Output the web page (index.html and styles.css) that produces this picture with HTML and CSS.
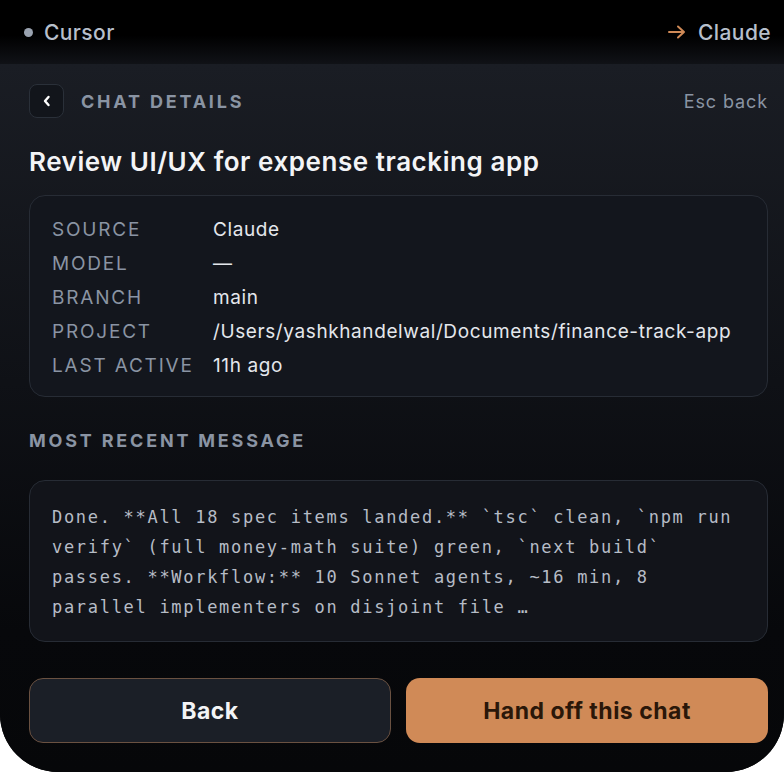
FILE: index.html
```html
<!DOCTYPE html>
<html lang="en">
<head>
<meta charset="utf-8">
<title>Chat details</title>
<link rel="stylesheet" href="styles.css">
</head>
<body>
<div class="frame">
  <header class="topbar">
    <div class="app-from"><span class="dot"></span><span>Cursor</span></div>
    <div class="app-to">
      <svg class="arrow" width="18" height="14" viewBox="0 0 18 14" aria-hidden="true"><path d="M1 7 H16 M10 1.5 L16 7 L10 12.5" fill="none" stroke="#d08a57" stroke-width="2" stroke-linecap="round" stroke-linejoin="round"/></svg>
      <span>Claude</span>
    </div>
  </header>
  <main class="panel">
    <div class="panel-head">
      <div class="head-left">
        <button class="icon-btn" aria-label="Back">
          <svg width="10" height="12" viewBox="0 0 10 12" aria-hidden="true"><path d="M6.5 2 L3 6 L6.5 10" fill="none" stroke="#ffffff" stroke-width="2.4" stroke-linecap="round" stroke-linejoin="round"/></svg>
        </button>
        <span class="section-title">CHAT DETAILS</span>
      </div>
      <span class="hint">Esc back</span>
    </div>
    <h1 class="title">Review UI/UX for expense tracking app</h1>
    <section class="card meta">
      <div class="meta-row"><span class="meta-label">SOURCE</span><span class="meta-value">Claude</span></div>
      <div class="meta-row"><span class="meta-label">MODEL</span><span class="meta-value">—</span></div>
      <div class="meta-row"><span class="meta-label">BRANCH</span><span class="meta-value">main</span></div>
      <div class="meta-row"><span class="meta-label">PROJECT</span><span class="meta-value">/Users/yashkhandelwal/Documents/finance-track-app</span></div>
      <div class="meta-row"><span class="meta-label">LAST ACTIVE</span><span class="meta-value">11h ago</span></div>
    </section>
    <h2 class="section-title msg-title">MOST RECENT MESSAGE</h2>
    <section class="card message">
      <p>Done. **All 18 spec items landed.** `tsc` clean, `npm run verify` (full money-math suite) green, `next build` passes. **Workflow:** 10 Sonnet agents, ~16 min, 8 parallel implementers on disjoint file …</p>
    </section>
    <div class="actions">
      <button class="btn btn-secondary">Back</button>
      <button class="btn btn-primary">Hand off this chat</button>
    </div>
  </main>
</div>
</body>
</html>
```
FILE: styles.css
```css
* { box-sizing: border-box; }
html, body { margin: 0; padding: 0; background: #ffffff; }
body { font-family: Inter, "Noto Sans", "Liberation Sans", sans-serif; }

.frame {
  width: 784px;
  height: 772px;
  background: #000;
  border-radius: 0 0 58px 58px;
  overflow: hidden;
  display: flex;
  flex-direction: column;
}

.topbar {
  height: 64px;
  flex: none;
  display: flex;
  align-items: center;
  justify-content: space-between;
  padding: 0 13px 0 24px;
  background: linear-gradient(#000 0%, #000 55%, #101217 100%);
  color: #b7bfcb;
  font-size: 21px;
  font-weight: 500;
  letter-spacing: 0.4px;
}
.app-from, .app-to { display: flex; align-items: center; }
.app-from { gap: 11px; }
.app-to { gap: 12px; }
.dot { width: 9px; height: 9px; border-radius: 50%; background: #9aa3b0; }
.arrow { display: block; }

.panel {
  flex: 1;
  display: flex;
  flex-direction: column;
  padding: 20px 16px 0 29px;
  background: linear-gradient(#1a1d24 0%, #0f1116 45%, #07080b 80%, #060709 100%);
}

.panel-head {
  height: 34px;
  display: flex;
  align-items: center;
  justify-content: space-between;
}
.head-left { display: flex; align-items: center; gap: 17px; }
.icon-btn {
  width: 35px;
  height: 34px;
  border-radius: 8px;
  border: 1.5px solid #2a3039;
  background: #12151b;
  display: flex;
  align-items: center;
  justify-content: center;
  padding: 0;
}
.section-title {
  font-size: 18px;
  font-weight: 700;
  letter-spacing: 2.8px;
  color: #8a94a3;
}
.hint { font-size: 18px; color: #8a94a3; letter-spacing: 0.9px; }

.title {
  margin: 28px 0 17px;
  font-size: 26px;
  line-height: 32px;
  font-weight: 600;
  color: #f3f4f6;
  letter-spacing: 0.55px;
}

.card {
  border: 1.5px solid #272c35;
  border-radius: 16px;
  background: #13161d;
}
.meta { padding: 16px 22px 14px; }
.meta-row {
  display: grid;
  grid-template-columns: 161px 1fr;
  height: 34px;
  align-items: center;
  font-size: 19px;
}
.meta-label { color: #8a94a3; letter-spacing: 1.8px; }
.meta-value { color: #e4e7ec; letter-spacing: 0.6px; }

.msg-title {
  margin: 34px 0 29px;
  line-height: 20px;
}

.message { padding: 21px 22px 19px; background: #12141a; }
.message p {
  margin: 0;
  font-family: "DejaVu Sans Mono", "Liberation Mono", monospace;
  font-size: 17px;
  letter-spacing: 1.7px;
  line-height: 30px;
  color: #b6bcc6;
}

.actions {
  margin-top: 36px;
  display: grid;
  grid-template-columns: 1fr 1fr;
  gap: 15px;
}
.btn {
  height: 65px;
  border-radius: 14px;
  font-family: Inter, "Noto Sans", sans-serif;
  font-size: 23px;
  font-weight: 700;
  letter-spacing: 0.5px;
}
.btn-secondary {
  background: #1b1f27;
  border: 1.5px solid #6a5141;
  color: #f3f4f6;
}
.btn-primary {
  background: #d08a57;
  border: none;
  color: #2a1709;
}
```
